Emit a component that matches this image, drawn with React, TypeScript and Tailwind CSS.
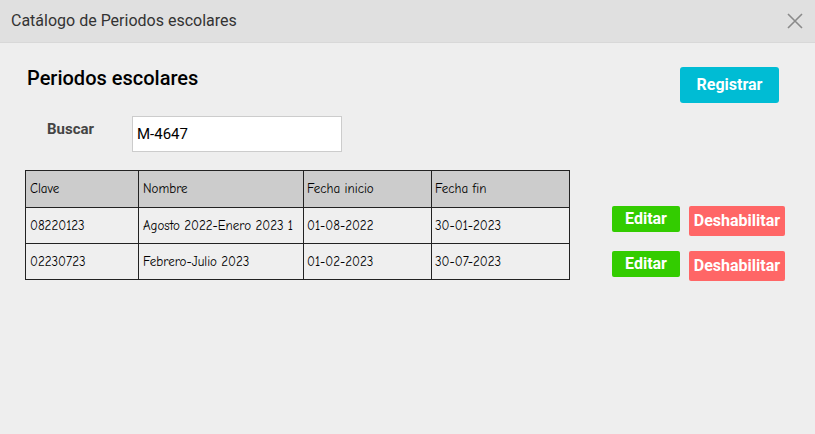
import React from "react";

const rows = [
  { clave: "08220123", nombre: "Agosto 2022-Enero 2023 1", inicio: "01-08-2022", fin: "30-01-2023" },
  { clave: "02230723", nombre: "Febrero-Julio 2023", inicio: "01-02-2023", fin: "30-07-2023" },
];

const hand = { fontFamily: '"Comic Sans MS", "Comic Neue", "DejaVu Sans", sans-serif' };

export default function App() {
  return (
    <div className="w-[815px] h-[434px] bg-[#eeeeee] flex flex-col" style={{ fontFamily: "Roboto, sans-serif" }}>
      <div className="h-[43px] bg-[#e0e0e0] border-b border-[#d8d8d8] flex items-center justify-between pl-[11px] pr-[12px]">
        <span className="text-[16px] text-[#333333]">Catálogo de Periodos escolares</span>
        <svg width="16" height="16" viewBox="0 0 16 16" className="text-[#8a8a8a]">
          <path d="M1 1 L15 15 M15 1 L1 15" stroke="currentColor" strokeWidth="1.6" fill="none" />
        </svg>
      </div>
      <div className="flex-1 relative">
        <div className="flex justify-between items-start pl-[27px] pr-[36px] pt-[24px]">
          <h1 className="text-[20px] font-medium text-black leading-[22px]">Periodos escolares</h1>
          <button className="w-[99px] h-[36px] bg-[#00bcd4] rounded-[3px] text-white text-[16px] font-bold">Registrar</button>
        </div>
        <div className="flex items-center pl-[47px] mt-[13px]">
          <span className="text-[15px] font-bold text-[#444444] w-[85px] -mt-[10px]">Buscar</span>
          <div className="w-[210px] h-[36px] bg-white border border-[#cccccc] flex items-center pl-[4px] text-[15px] text-black">M-4647</div>
        </div>
        <div className="flex items-start pl-[25px] mt-[18px]">
          <table className="border-collapse text-[13px] text-[#000]" style={hand}>
            <thead>
              <tr className="bg-[#cccccc] h-[37px]">
                <th className="border-[1.5px] border-[#222] w-[113px] text-left font-normal pl-[4px]">Clave</th>
                <th className="border-[1.5px] border-[#222] w-[165px] text-left font-normal pl-[4px]">Nombre</th>
                <th className="border-[1.5px] border-[#222] w-[128px] text-left font-normal pl-[3px]">Fecha inicio</th>
                <th className="border-[1.5px] border-[#222] w-[138px] text-left font-normal pl-[3px]">Fecha fin</th>
              </tr>
            </thead>
            <tbody>
              {rows.map((r) => (
                <tr key={r.clave} className="bg-[#efefef] h-[36px]">
                  <td className="border-[1.5px] border-[#222] pl-[4px] whitespace-nowrap">{r.clave}</td>
                  <td className="border-[1.5px] border-[#222] pl-[4px] whitespace-nowrap">{r.nombre}</td>
                  <td className="border-[1.5px] border-[#222] pl-[3px] whitespace-nowrap">{r.inicio}</td>
                  <td className="border-[1.5px] border-[#222] pl-[3px] whitespace-nowrap">{r.fin}</td>
                </tr>
              ))}
            </tbody>
          </table>
          <div className="flex flex-col gap-[15px] ml-[42px] mt-[36px]">
            {rows.map((r) => (
              <div key={r.clave} className="flex items-start gap-[9px]">
                <button className="w-[68px] h-[26px] bg-[#33cc00] rounded-[2px] text-white text-[16px] font-bold leading-none">Editar</button>
                <button className="w-[96px] h-[30px] bg-[#ff6666] rounded-[2px] text-white text-[16px] font-bold leading-none">Deshabilitar</button>
              </div>
            ))}
          </div>
        </div>
      </div>
    </div>
  );
}
